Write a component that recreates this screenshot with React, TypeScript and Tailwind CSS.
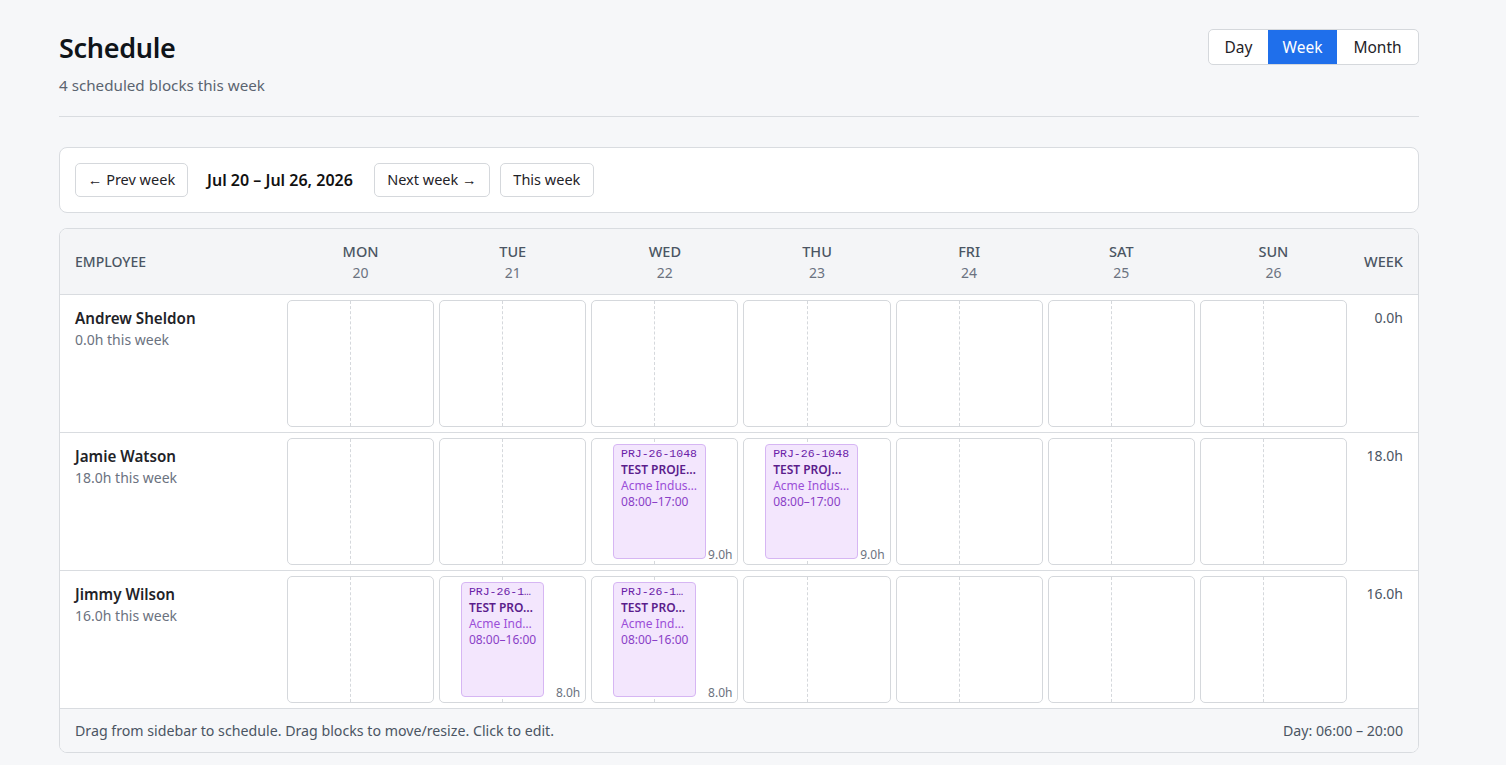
import React from "react";

const FONT = { fontFamily: "'Noto Sans', 'Liberation Sans', sans-serif" };
const MONO = { fontFamily: "'Liberation Mono', 'DejaVu Sans Mono', monospace" };

type Block = { day: number; code: string; title: string; client: string; time: string; hours: string; end: number };
type Emp = { name: string; hours: string; blocks: Block[] };

const days = [
  { d: "MON", n: 20 },
  { d: "TUE", n: 21 },
  { d: "WED", n: 22 },
  { d: "THU", n: 23 },
  { d: "FRI", n: 24 },
  { d: "SAT", n: 25 },
  { d: "SUN", n: 26 },
];

const emps: Emp[] = [
  { name: "Andrew Sheldon", hours: "0.0h", blocks: [] },
  {
    name: "Jamie Watson",
    hours: "18.0h",
    blocks: [
      { day: 2, code: "PRJ-26-1048", title: "TEST PROJE…", client: "Acme Indus…", time: "08:00–17:00", hours: "9.0h", end: 17 },
      { day: 3, code: "PRJ-26-1048", title: "TEST PROJ…", client: "Acme Indus…", time: "08:00–17:00", hours: "9.0h", end: 17 },
    ],
  },
  {
    name: "Jimmy Wilson",
    hours: "16.0h",
    blocks: [
      { day: 1, code: "PRJ-26-1…", title: "TEST PRO…", client: "Acme Ind…", time: "08:00–16:00", hours: "8.0h", end: 16 },
      { day: 2, code: "PRJ-26-1…", title: "TEST PRO…", client: "Acme Ind…", time: "08:00–16:00", hours: "8.0h", end: 16 },
    ],
  },
];

function DayCell({ blocks }: { blocks: Block[] }) {
  return (
    <div className="relative flex-1 h-[127px] bg-white border border-[#d5d8dc] rounded-[5px] overflow-hidden">
      <div className="absolute top-0 bottom-0 left-[42.86%] border-l border-dashed border-[#d5d8dc]" />
      {blocks.map((b, i) => (
        <div
          key={i}
          className="absolute top-[5px] bottom-[5px] bg-[#f3e6fd] border border-[#d6b6f3] rounded-[4px] pl-[7px] pr-[2px] pt-[1px] overflow-hidden whitespace-nowrap"
          style={{ left: `${(2 / 14) * 100}%`, width: `${((b.end - 8) / 14) * 100}%` }}
        >
          <div className="text-[11.5px] leading-[16px] text-[#6b21a8]" style={MONO}>{b.code}</div>
          <div className="text-[12px] leading-[16px] font-semibold text-[#5b1d8c]">{b.title}</div>
          <div className="text-[12px] leading-[16px] text-[#9b4fd8]">{b.client}</div>
          <div className="text-[12px] leading-[15px] text-[#8a3fc7]">{b.time}</div>
        </div>
      ))}
      {blocks.length > 0 && (
        <div className="absolute right-[5px] bottom-[1px] text-[12px] leading-[16px] text-[#6b7280]">{blocks[0].hours}</div>
      )}
    </div>
  );
}

export default function App() {
  return (
    <div className="min-h-screen bg-[#f6f7f9] text-[#111827]" style={FONT}>
      <div className="w-[1360px] ml-[59px] pt-[28px]">
        <div className="flex justify-between items-start pb-[20px] border-b border-[#d9dce0]">
          <div>
            <h1 className="text-[27px] leading-[40px] font-semibold text-[#0f1419] tracking-[-0.3px]">Schedule</h1>
            <div className="mt-[6px] text-[15.2px] leading-[22px] text-[#5b6470]">4 scheduled blocks this week</div>
          </div>
          <div className="mt-[1px] flex h-[36px] border border-[#d5d8dc] rounded-[5px] overflow-hidden bg-white text-[15.5px]">
            <div className="w-[59px] pt-[2px] flex items-center justify-center text-[#1f2328]">Day</div>
            <div className="w-[69px] pt-[2px] flex items-center justify-center bg-[#1f6feb] text-white">Week</div>
            <div className="w-[81px] pt-[2px] flex items-center justify-center text-[#1f2328]">Month</div>
          </div>
        </div>

        <div className="mt-[30px] bg-white border border-[#d9dce0] rounded-[8px] h-[66px] px-[15px] flex items-center gap-[10px] text-[14.5px]">
          <div className="h-[34px] w-[113px] flex items-center justify-center border border-[#d5d8dc] rounded-[5px] text-[#1f2328]">← Prev week</div>
          <div className="pl-[9px] pr-[11px] text-[16px] font-semibold text-[#111]">Jul 20 – Jul 26, 2026</div>
          <div className="h-[34px] w-[116px] flex items-center justify-center border border-[#d5d8dc] rounded-[5px] text-[#1f2328]">Next week →</div>
          <div className="h-[34px] w-[94px] flex items-center justify-center border border-[#d5d8dc] rounded-[5px] text-[#1f2328]">This week</div>
        </div>

        <div className="mt-[15px] bg-white border border-[#d9dce0] rounded-[8px] overflow-hidden">
          <div className="flex h-[66px] bg-[#f4f5f7] border-b border-[#d9dce0] items-center">
            <div className="w-[227px] pl-[15px] text-[14px] font-medium text-[#4b5563]">EMPLOYEE</div>
            <div className="flex-1 flex gap-[5px]">
              {days.map((d) => (
                <div key={d.d} className="flex-1 text-center">
                  <div className="text-[14.5px] leading-[22px] font-medium text-[#4b5563]">{d.d}</div>
                  <div className="text-[14px] leading-[22px] text-[#6b7280]">{d.n}</div>
                </div>
              ))}
            </div>
            <div className="w-[71px] pr-[15px] text-right text-[14.5px] font-medium text-[#4b5563]">WEEK</div>
          </div>

          {emps.map((e, idx) => (
            <div key={e.name} className={"flex py-[5px] " + (idx > 0 ? "border-t border-[#d9dce0]" : "")}>
              <div className="w-[227px] pl-[15px] pt-[7px]">
                <div className="text-[15.2px] leading-[22px] font-semibold text-[#1f2328]">{e.name}</div>
                <div className="text-[14px] leading-[22px] text-[#6b7280]">{e.hours} this week</div>
              </div>
              <div className="flex-1 flex gap-[5px]">
                {days.map((_, di) => (
                  <DayCell key={di} blocks={e.blocks.filter((b) => b.day === di)} />
                ))}
              </div>
              <div className="w-[71px] pr-[15px] pt-[7px] text-right text-[14px] leading-[22px] text-[#4b5563]">{e.hours}</div>
            </div>
          ))}

          <div className="flex justify-between items-center h-[44px] px-[15px] bg-[#f6f7f9] border-t border-[#d9dce0] text-[14.2px] text-[#4b5563]">
            <div>Drag from sidebar to schedule. Drag blocks to move/resize. Click to edit.</div>
            <div>Day: 06:00 – 20:00</div>
          </div>
        </div>
      </div>
    </div>
  );
}
